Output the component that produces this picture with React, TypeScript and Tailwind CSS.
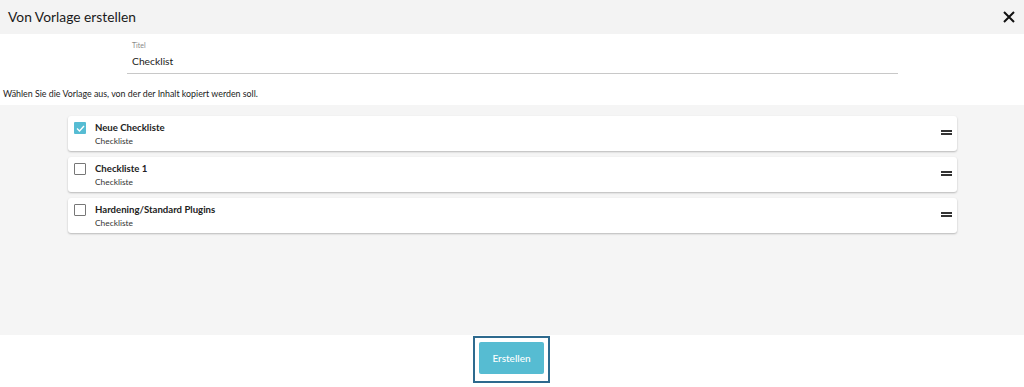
import React from "react";

const items = [
  { title: "Neue Checkliste", sub: "Checkliste", checked: true },
  { title: "Checkliste 1", sub: "Checkliste", checked: false },
  { title: "Hardening/Standard Plugins", sub: "Checkliste", checked: false },
];

export default function App() {
  return (
    <div className="w-[1024px] h-[387px] bg-white flex flex-col text-[#222]" style={{ fontFamily: "Lato, 'Noto Sans', sans-serif" }}>
      <div className="h-[34px] bg-[#f3f3f3] flex items-center justify-between pl-[8px] pr-[8px]">
        <span className="text-[13.8px] text-[#1a1a1a]">Von Vorlage erstellen</span>
        <svg width="12" height="12" viewBox="0 0 12 12" className="mr-[1px]">
          <path d="M1 1 L11 11 M11 1 L1 11" stroke="#111" strokeWidth="2" />
        </svg>
      </div>
      <div className="h-[71px] flex flex-col">
        <div className="pl-[127px] pt-[6px]">
          <div className="w-[771px] border-b border-[#c8c8c8] pl-[5px]">
            <div className="text-[7px] text-[#888] leading-[10px]">Titel</div>
            <div className="text-[10.3px] leading-[14px] pt-[4px] pb-[5px] text-[#222]">Checklist</div>
          </div>
        </div>
        <div className="pl-[3px] pt-[14px] text-[8.85px] leading-[12px] text-[#222]">
          Wählen Sie die Vorlage aus, von der der Inhalt kopiert werden soll.
        </div>
      </div>
      <div className="h-[230px] bg-[#f5f5f5] pt-[11px] pl-[68px] pr-[67px] flex flex-col gap-[6px]">
        {items.map((it) => (
          <div key={it.title} className="h-[35px] bg-white rounded-[3px] shadow-[0_1px_2px_rgba(0,0,0,0.25)] flex items-start pl-[6px] pr-[5px]">
            <div className="pt-[6px]">
              {it.checked ? (
                <div className="w-[12px] h-[12px] bg-[#56bcd3] rounded-[1px] flex items-center justify-center">
                  <svg width="9" height="7" viewBox="0 0 9 7">
                    <path d="M1 3.5 L3.5 6 L8 1" stroke="#fff" strokeWidth="1.3" fill="none" />
                  </svg>
                </div>
              ) : (
                <div className="w-[12px] h-[12px] border-[1.5px] border-[#777] rounded-[1px] bg-white" />
              )}
            </div>
            <div className="pl-[9px] pt-[5px] flex-1">
              <div className="text-[9.6px] font-bold leading-[13px] text-[#222]">{it.title}</div>
              <div className="text-[8.4px] leading-[11px] pt-[2px] text-[#333]">{it.sub}</div>
            </div>
            <div className="pt-[14px] pr-[0px]">
              <div className="w-[11px] flex flex-col gap-[1px]">
                <div className="h-[2px] bg-[#333]" />
                <div className="h-[2px] bg-[#333]" />
              </div>
            </div>
          </div>
        ))}
      </div>
      <div className="flex-1 flex justify-center pt-[1px]">
        <div className="border-2 border-[#2e6a8e] p-[4px] h-[47px] ml-[-1px]">
          <div className="w-[65px] h-[32px] bg-[#56bcd2] rounded-[2px] flex items-center justify-center text-white text-[10px] font-medium">
            Erstellen
          </div>
        </div>
      </div>
    </div>
  );
}
